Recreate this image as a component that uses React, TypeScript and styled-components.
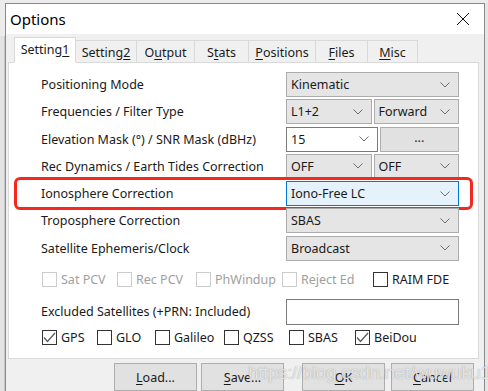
import React from "react"
import styled, { createGlobalStyle } from "styled-components"

const Global = createGlobalStyle`
  html, body { margin: 0; padding: 0; }
  body { font-family: "Noto Sans", "Segoe UI", sans-serif; color: #1a1a1a; }
`

const Chevron: React.FC = () => (
  <svg width="10" height="6" viewBox="0 0 10 6">
    <path d="M0.5 0.5 L5 5 L9.5 0.5" fill="none" stroke="#6d6d6d" strokeWidth="1" />
  </svg>
)

const Check: React.FC = () => (
  <svg width="13" height="11" viewBox="0 0 13 11">
    <path d="M1 5.5 L4.5 9.5 L12 1" fill="none" stroke="#5a5a5a" strokeWidth="1.3" />
  </svg>
)

const Combo: React.FC<{ value: string; $tone?: "gray" | "white" | "active"; width?: number }> = ({
  value,
  $tone = "gray",
  width,
}) => (
  <S.Combo $tone={$tone} style={width ? { width } : undefined}>
    <span>{value}</span>
    <Chevron />
  </S.Combo>
)

const CheckBox: React.FC<{ label: string; checked?: boolean; disabled?: boolean }> = ({ label, checked, disabled }) => (
  <S.CheckItem $disabled={disabled}>
    <S.Box $disabled={disabled}>{checked && <Check />}</S.Box>
    {label}
  </S.CheckItem>
)

const tabs: { label: React.ReactNode; width: number }[] = [
  { label: <>Setting<u>2</u></>, width: 61 },
  { label: <>O<u>u</u>tput</>, width: 58 },
  { label: <>S<u>t</u>ats</>, width: 54 },
  { label: <><u>P</u>ositions</>, width: 67 },
  { label: <><u>F</u>iles</>, width: 52 },
  { label: <><u>M</u>isc</>, width: 50 },
]

export default function App() {
  return (
    <>
      <Global />
      <S.Screen>
        <S.AppEdge />
        <S.Dialog>
          <S.TitleBar>
            <S.Title>Options</S.Title>
            <S.Close>
              <svg width="14" height="14" viewBox="0 0 14 14">
                <path d="M1 1 L13 13 M13 1 L1 13" stroke="#111" strokeWidth="1" />
              </svg>
            </S.Close>
          </S.TitleBar>
          <S.Body>
            <S.TabStrip>
              <S.Tab $active $width={62}>
                Setting<u>1</u>
              </S.Tab>
              {tabs.map((t, i) => (
                <S.Tab key={i} $width={t.width}>
                  {t.label}
                </S.Tab>
              ))}
            </S.TabStrip>
            <S.Panel>
              <S.Rows>
                <S.Row>
                  <S.Label>Positioning Mode</S.Label>
                  <S.Controls>
                    <Combo value="Kinematic" />
                  </S.Controls>
                </S.Row>
                <S.Row>
                  <S.Label>Frequencies / Filter Type</S.Label>
                  <S.Controls>
                    <Combo value="L1+2" width={86} />
                    <Combo value="Forward" width={85} />
                  </S.Controls>
                </S.Row>
                <S.Row>
                  <S.Label>Elevation Mask (°) / SNR Mask (dBHz)</S.Label>
                  <S.Controls>
                    <Combo value="15" $tone="white" width={86} />
                    <S.SmallButton>...</S.SmallButton>
                  </S.Controls>
                </S.Row>
                <S.Row>
                  <S.Label>Rec Dynamics / Earth Tides Correction</S.Label>
                  <S.Controls>
                    <Combo value="OFF" width={86} />
                    <Combo value="OFF" width={85} />
                  </S.Controls>
                </S.Row>
                <S.Row>
                  <S.Highlight />
                  <S.Label>Ionosphere Correction</S.Label>
                  <S.Controls>
                    <Combo value="Iono-Free LC" $tone="active" />
                  </S.Controls>
                </S.Row>
                <S.Row>
                  <S.Label>Troposphere Correction</S.Label>
                  <S.Controls>
                    <Combo value="SBAS" />
                  </S.Controls>
                </S.Row>
                <S.Row>
                  <S.Label>Satellite Ephemeris/Clock</S.Label>
                  <S.Controls>
                    <Combo value="Broadcast" />
                  </S.Controls>
                </S.Row>
              </S.Rows>

              <S.CheckRow $cols="75px 79px 86px 91px 1fr" $top={10}>
                <CheckBox label="Sat PCV" disabled />
                <CheckBox label="Rec PCV" disabled />
                <CheckBox label="PhWindup" disabled />
                <CheckBox label="Reject Ed" disabled />
                <CheckBox label="RAIM FDE" />
              </S.CheckRow>

              <S.ExcludeRow>
                <S.Label>Excluded Satellites (+PRN: Included)</S.Label>
                <S.TextInput />
              </S.ExcludeRow>

              <S.CheckRow $cols="55px 58px 69px 65px 66px 1fr" $top={4}>
                <CheckBox label="GPS" checked />
                <CheckBox label="GLO" />
                <CheckBox label="Galileo" />
                <CheckBox label="QZSS" />
                <CheckBox label="SBAS" />
                <CheckBox label="BeiDou" checked />
              </S.CheckRow>
            </S.Panel>
            <S.ButtonBar>
              <S.Button>
                <u>L</u>oad...
              </S.Button>
              <S.Button>
                <u>S</u>ave...
              </S.Button>
              <S.Button $gap={18}>
                <u>O</u>K
              </S.Button>
              <S.Button $gap={6}>
                <u>C</u>ancel
              </S.Button>
            </S.ButtonBar>
          </S.Body>
        </S.Dialog>
        <S.AppEdge $right />
        <S.Watermark>https://blog.csdn.net/wuwuku123</S.Watermark>
      </S.Screen>
    </>
  )
}

const S = {
  Screen: styled.div`
    position: relative;
    display: flex;
    width: 488px;
    height: 391px;
    overflow: hidden;
    background: #ececec;
    padding-top: 3px;
    box-sizing: border-box;
  `,
  AppEdge: styled.div<{ $right?: boolean }>`
    width: ${(p) => (p.$right ? "3px" : "5px")};
    flex-shrink: 0;
    margin-top: ${(p) => (p.$right ? "0" : "33px")};
    background: ${(p) => (p.$right ? "#e6e6e6" : "#e3e3e3")};
    border-right: ${(p) => (p.$right ? "none" : "1px solid #c8c8c8")};
    box-sizing: border-box;
  `,
  Dialog: styled.div`
    width: 480px;
    flex-shrink: 0;
    display: flex;
    flex-direction: column;
    border: 1px solid #8a8a8a;
    border-bottom: none;
    background: #f0f0f0;
    box-sizing: border-box;
  `,
  TitleBar: styled.div`
    height: 32px;
    display: flex;
    align-items: center;
    justify-content: space-between;
    background: #fff;
    padding: 0 14px 0 4px;
  `,
  Title: styled.div`
    font-size: 15px;
    color: #000;
  `,
  Close: styled.div`
    display: flex;
    align-items: center;
  `,
  Body: styled.div`
    display: flex;
    flex-direction: column;
    padding: 0 5px 0 2px;
  `,
  TabStrip: styled.div`
    display: flex;
    align-items: flex-end;
    height: 29px;
    padding-left: 6px;
    position: relative;
    z-index: 1;
    margin-bottom: -1px;
  `,
  Tab: styled.div<{ $active?: boolean; $width: number }>`
    width: ${(p) => p.$width}px;
    height: ${(p) => (p.$active ? 26 : 23)}px;
    box-sizing: border-box;
    display: flex;
    align-items: center;
    justify-content: center;
    font-size: 12.5px;
    border: 1px solid #d9d9d9;
    border-bottom: ${(p) => (p.$active ? "1px solid #fff" : "1px solid #d9d9d9")};
    border-left: ${(p) => (p.$active ? "1px solid #d9d9d9" : "none")};
    background: ${(p) => (p.$active ? "#fff" : "#f0f0f0")};
    padding-bottom: ${(p) => (p.$active ? 2 : 0)}px;
    padding-top: ${(p) => (p.$active ? 0 : 1)}px;
    u { text-underline-offset: 2px; }
  `,
  Panel: styled.div`
    height: 297px;
    box-sizing: border-box;
    background: #fff;
    border: 1px solid #d9d9d9;
    padding: 9px 19px 0 32px;
  `,
  Rows: styled.div`
    display: flex;
    flex-direction: column;
    gap: 2.3px;
  `,
  Row: styled.div`
    position: relative;
    display: flex;
    align-items: center;
    height: 25px;
  `,
  Highlight: styled.div`
    position: absolute;
    left: -27px;
    right: -14px;
    top: -4px;
    bottom: -4px;
    border: 3px solid #f5281e;
    border-radius: 6px;
    pointer-events: none;
  `,
  Label: styled.div`
    flex: 1;
    font-size: 12.5px;
    white-space: nowrap;
  `,
  Controls: styled.div`
    width: 173px;
    display: flex;
    gap: 2px;
    height: 100%;
  `,
  Combo: styled.div<{ $tone: "gray" | "white" | "active" }>`
    flex: 1;
    box-sizing: border-box;
    height: 100%;
    display: flex;
    align-items: center;
    justify-content: space-between;
    padding: 0 8px 0 4px;
    font-size: 12.5px;
    background: ${(p) => (p.$tone === "white" ? "#fff" : p.$tone === "active" ? "#e5f1fb" : "#e5e5e5")};
    border: 1px solid ${(p) => (p.$tone === "white" ? "#7a7a7a" : p.$tone === "active" ? "#0078d7" : "#acacac")};
  `,
  SmallButton: styled.div`
    flex: 1;
    box-sizing: border-box;
    display: flex;
    align-items: center;
    justify-content: center;
    background: #e1e1e1;
    border: 1px solid #adadad;
    font-size: 12.5px;
    padding-bottom: 4px;
  `,
  CheckRow: styled.div<{ $cols: string; $top: number }>`
    display: grid;
    grid-template-columns: ${(p) => p.$cols};
    margin: ${(p) => p.$top}px 0 0 1px;
    height: 16px;
    align-items: center;
  `,
  CheckItem: styled.div<{ $disabled?: boolean }>`
    display: flex;
    align-items: center;
    gap: 4px;
    font-size: 12.5px;
    white-space: nowrap;
    color: ${(p) => (p.$disabled ? "#a0a0a0" : "#1a1a1a")};
  `,
  Box: styled.div<{ $disabled?: boolean }>`
    width: 15px;
    height: 15px;
    box-sizing: border-box;
    border: 1px solid ${(p) => (p.$disabled ? "#cccccc" : "#333")};
    display: flex;
    align-items: center;
    justify-content: center;
    background: #fff;
  `,
  ExcludeRow: styled.div`
    display: flex;
    align-items: center;
    height: 26px;
    margin-top: 12px;
  `,
  TextInput: styled.div`
    width: 173px;
    height: 100%;
    box-sizing: border-box;
    border: 1px solid #7a7a7a;
    background: #fff;
  `,
  ButtonBar: styled.div`
    display: flex;
    padding: 4px 0 0 106px;
  `,
  Button: styled.div<{ $gap?: number }>`
    width: 83px;
    height: 28px;
    box-sizing: border-box;
    margin-left: ${(p) => p.$gap ?? 4}px;
    &:first-child { margin-left: 0; }
    display: flex;
    align-items: center;
    justify-content: center;
    font-size: 12.5px;
    background: #e1e1e1;
    border: 1px solid #adadad;
    u { text-underline-offset: 2px; }
  `,
  Watermark: styled.div`
    position: absolute;
    left: 248px;
    top: 362px;
    font-family: "Liberation Sans", Arial, sans-serif;
    font-size: 19px;
    letter-spacing: -0.4px;
    color: rgba(255, 255, 255, 0.75);
    text-shadow: 0 0 1px rgba(80, 80, 80, 0.6);
    white-space: nowrap;
    pointer-events: none;
  `,
}
